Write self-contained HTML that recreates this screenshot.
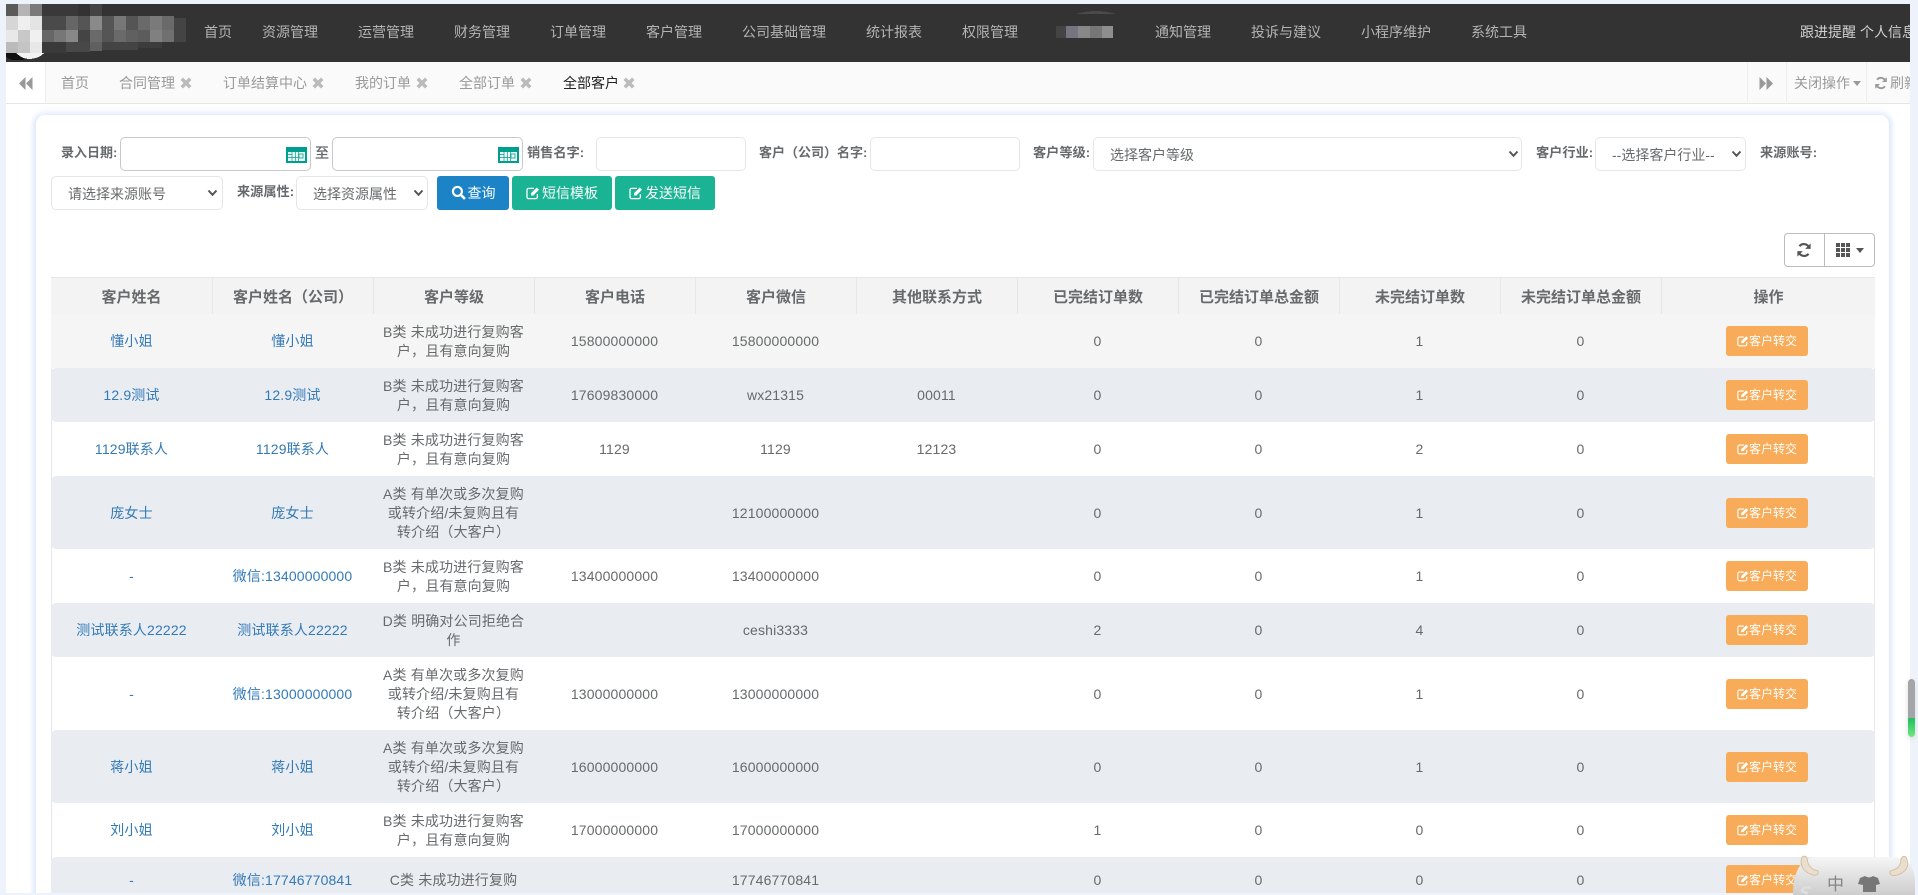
<!DOCTYPE html>
<html lang="zh"><head><meta charset="utf-8"><title>全部客户</title>
<style>
*{box-sizing:border-box}
html,body{margin:0;padding:0;width:1918px;height:895px;overflow:hidden;background:#eef3fb}
body{font-family:"Liberation Sans","Noto Sans CJK SC",sans-serif;font-size:14px;color:#676a6c;position:relative}
.a{position:absolute;white-space:nowrap}
#page{position:absolute;left:6px;top:4px;width:1904px;height:889px;background:#fff;overflow:hidden}
#root{position:absolute;left:-6px;top:-4px;width:1918px;height:895px}
#nav{position:absolute;left:6px;top:4px;width:1904px;height:58px;background:#333}
.n{position:absolute;top:22px;line-height:20px;color:#b4b4b4;white-space:nowrap;font-size:14px}
#tabs{position:absolute;left:6px;top:62px;width:1904px;height:42px;background:#fafafa;border-bottom:1px solid #e5e6e8}
.t{position:absolute;top:11px;line-height:20px;color:#999;font-size:14px;white-space:nowrap}
.x{position:absolute;top:15px;width:12px;height:12px;color:#bbb}
.v{position:absolute;top:0;width:1px;height:40px;background:#eee}
#card{position:absolute;left:36px;top:115px;width:1853px;height:800px;background:#fff;border-radius:9px;box-shadow:-3px 0 5px #dfe9fe,3px 0 5px #dfe9fe,0 -5px 9px #f2f7fe}
.l{position:absolute;top:142px;line-height:22px;font-size:13.2px;font-weight:bold;color:#676a6c;white-space:nowrap}
.i,select{position:absolute;height:34px;border:1px solid #e5e6e7;border-radius:5px;background:#fff;margin:0}
select{appearance:none;-webkit-appearance:none;font:14px "Liberation Sans","Noto Sans CJK SC",sans-serif;color:#676a6c;padding:2px 0 0 16px}
.cv{position:absolute;width:11px;height:8px;color:#555}
.b{position:absolute;top:176px;height:34px;border-radius:3px;color:#fff;font-size:14px;line-height:34px;text-align:center;white-space:nowrap}
.b svg{vertical-align:-2px;margin-right:2px}
table{position:absolute;left:51px;top:277px;width:1824px;border-collapse:separate;border-spacing:0;table-layout:fixed}
th{height:37px;background:#f3f3f4;font-size:15px;font-weight:bold;color:#676a6c;text-align:center;border-left:1px solid #e7e7e9;border-top:1px solid #e7e7e9;padding:0}
th:first-child{border-left:0}
td{text-align:center;vertical-align:middle;padding:8.5px 6px 7.5px;line-height:19px;font-size:14px;color:#676a6c;letter-spacing:.15px}
td a{color:#337ab7;text-decoration:none}
tr.h td{background:#f5f5f5;height:54px}
tr.g td{background:#e9ecf1}
tr.g td:first-child{border-radius:5px 0 0 5px}
tr.g td:last-child{border-radius:0 5px 5px 0}
.o{display:inline-block;width:82px;height:30px;line-height:30px;background:#f8ac59;color:#fff;font-size:12px;border-radius:3px;vertical-align:middle;letter-spacing:0;position:relative;top:-.5px;left:-1px}
.o svg{vertical-align:-2px}
</style></head><body>
<svg width="0" height="0" style="position:absolute">
<symbol id="ed" viewBox="0 0 14 14"><path d="M11.4 8v3a1.6 1.6 0 0 1-1.6 1.6H2.6A1.6 1.6 0 0 1 1 11V4a1.6 1.6 0 0 1 1.6-1.6H8" fill="none" stroke="currentColor" stroke-width="1.3"/><path d="M5 7.2 10.7 1.5 13 3.8 7.3 9.5H5Z" fill="currentColor"/></symbol>
<symbol id="xx" viewBox="0 0 12 12"><path d="M3 .5 6 3.5 9 .5 11.500 3 8.500 6 11.500 9 9 11.500 6 8.500 3 11.500 .5 9 3.500 6 .5 3Z" fill="currentColor"/></symbol>
<symbol id="cal" viewBox="0 0 21 16"><rect width="21" height="16" fill="#009e8e"/><rect x="2" y="5" width="17" height="9" fill="#eef9f7"/><path d="M2 7.500h4M2 10.500h10M6 5v9M9.500 5v9M12.500 5v9" stroke="#009e8e" stroke-width=".7"/><rect x="13" y="7" width="4" height="4" fill="#eef9f7" stroke="#009e8e" stroke-width=".8"/></symbol>
<symbol id="re" viewBox="0 0 14 14"><path d="M11.6 5.200A5 5 0 0 0 3 3.700M2.400 8.800A5 5 0 0 0 11 10.300" fill="none" stroke="currentColor" stroke-width="1.900"/><path d="M12.800 1.200V6H8ZM1.200 12.800V8H6Z" fill="currentColor"/></symbol>
<symbol id="cv" viewBox="0 0 11 8"><path d="M1.500 1.500 5.500 5.800 9.500 1.500" fill="none" stroke="currentColor" stroke-width="2"/></symbol>
</svg>
<div id="page"><div id="root">

<div id="nav"></div>
<svg class="a" style="left:6px;top:4px" width="186" height="58" viewBox="0 0 186 58" shape-rendering="crispEdges">
<path d="M0 46h40q-8 8-24 10H8q-6 0-8-4Z" fill="#111"/>
<path d="M8 46h32q-4 8-16 9-10 0-16-9Z" fill="#f2f2f2"/>
<g fill="#555"><rect width="12" height="12" fill="#5a5a5a"/><rect x="12" width="12" height="12" fill="#b4b4b4"/><rect x="24" width="12" height="12" fill="#7a7a7a"/><rect x="36" width="36" height="12" fill="#393939"/><rect x="84" width="12" height="12" fill="#444"/></g>
<rect y="12" width="12" height="14" fill="#d6d6d6"/><rect x="12" y="12" width="12" height="14" fill="#efefef"/><rect x="24" y="12" width="12" height="14" fill="#e4e4e4"/>
<rect x="36" y="12" width="24" height="14" fill="#4a4a4a"/><rect x="60" y="12" width="12" height="14" fill="#666"/><rect x="72" y="12" width="12" height="14" fill="#555"/><rect x="84" y="12" width="12" height="14" fill="#8a8a8a"/><rect x="96" y="12" width="12" height="14" fill="#555"/><rect x="108" y="12" width="12" height="14" fill="#777"/><rect x="120" y="12" width="12" height="14" fill="#555"/><rect x="132" y="12" width="12" height="14" fill="#6a6a6a"/><rect x="144" y="12" width="12" height="14" fill="#7a7a7a"/><rect x="156" y="12" width="12" height="14" fill="#6a6a6a"/><rect x="168" y="14" width="12" height="12" fill="#444"/>
<rect y="26" width="12" height="12" fill="#e8e8e8"/><rect x="12" y="26" width="12" height="12" fill="#c8c8c8"/><rect x="24" y="26" width="12" height="12" fill="#f0f0f0"/>
<rect x="36" y="26" width="12" height="12" fill="#666"/><rect x="48" y="26" width="12" height="12" fill="#777"/><rect x="60" y="26" width="12" height="12" fill="#888"/><rect x="72" y="26" width="12" height="12" fill="#444"/><rect x="84" y="26" width="12" height="12" fill="#6a6a6a"/><rect x="96" y="26" width="12" height="12" fill="#555"/><rect x="108" y="26" width="12" height="12" fill="#6a6a6a"/><rect x="120" y="26" width="12" height="12" fill="#606060"/><rect x="132" y="26" width="12" height="12" fill="#5c5c5c"/><rect x="144" y="26" width="12" height="12" fill="#808080"/><rect x="156" y="26" width="12" height="12" fill="#707070"/><rect x="168" y="26" width="12" height="12" fill="#444"/>
<rect y="38" width="12" height="11" fill="#bbb"/><rect x="12" y="38" width="12" height="11" fill="#c4c4c4"/><rect x="24" y="38" width="12" height="11" fill="#e8e8e8"/>
<rect x="36" y="38" width="24" height="11" fill="#3a3a3a"/><rect x="60" y="38" width="24" height="10" fill="#484848"/><rect x="84" y="38" width="12" height="9" fill="#606060"/><rect x="96" y="38" width="36" height="8" fill="#444"/><rect x="132" y="38" width="24" height="6" fill="#3c3c3c"/>
</svg>
<span class="n" style="left:204px">首页</span><span class="n" style="left:262px">资源管理</span><span class="n" style="left:358px">运营管理</span><span class="n" style="left:454px">财务管理</span><span class="n" style="left:550px">订单管理</span><span class="n" style="left:646px">客户管理</span><span class="n" style="left:742px">公司基础管理</span><span class="n" style="left:866px">统计报表</span><span class="n" style="left:962px">权限管理</span>
<svg class="a" style="left:1056px;top:10px" width="64" height="40" viewBox="0 0 64 40" shape-rendering="crispEdges"><path d="M20 4Q40-2 60 4Z" fill="#4a4a4a"/><rect y="16" width="10" height="12" fill="#444"/><rect x="10" y="16" width="12" height="12" fill="#777380"/><rect x="22" y="16" width="12" height="12" fill="#888"/><rect x="34" y="16" width="12" height="12" fill="#777"/><rect x="46" y="16" width="11" height="12" fill="#8e8e8e"/></svg>
<span class="n" style="left:1155px">通知管理</span><span class="n" style="left:1251px">投诉与建议</span><span class="n" style="left:1361px">小程序维护</span><span class="n" style="left:1471px">系统工具</span>
<span class="n" style="left:1800px;color:#d0d0d0">跟进提醒</span><span class="n" style="left:1860px;color:#d0d0d0;width:50px;overflow:hidden">个人信息</span>

<div id="tabs">
<div class="a" style="left:0;top:0;width:39px;height:41px;background:#fff"></div>
<svg class="a" style="left:13px;top:15px;color:#999" width="14" height="13" viewBox="0 0 14 13"><path d="M0 6.500 6.500 0V13ZM7 6.500 13.500 0V13Z" fill="currentColor"/></svg>
<i class="v" style="left:39px"></i>
<span class="t" style="left:55px">首页</span>
<span class="t" style="left:113px">合同管理</span><svg class="x" style="left:174px"><use href="#xx"/></svg>
<span class="t" style="left:217px">订单结算中心</span><svg class="x" style="left:306px"><use href="#xx"/></svg>
<span class="t" style="left:349px">我的订单</span><svg class="x" style="left:410px"><use href="#xx"/></svg>
<span class="t" style="left:453px">全部订单</span><svg class="x" style="left:514px"><use href="#xx"/></svg>
<span class="t" style="left:557px;color:#222">全部客户</span><svg class="x" style="left:617px"><use href="#xx"/></svg>
<i class="v" style="left:1741px"></i>
<svg class="a" style="left:1753px;top:15px;color:#999" width="14" height="13" viewBox="0 0 14 13"><path d="M7 6.500 .5 0V13ZM14 6.500 7.500 0V13Z" fill="currentColor"/></svg>
<i class="v" style="left:1780px"></i>
<span class="t" style="left:1788px">关闭操作</span><svg class="a" style="left:1847px;top:19px;color:#999" width="8" height="5"><path d="M0 0H8L4 5Z" fill="currentColor"/></svg>
<i class="v" style="left:1860px"></i>
<svg class="a" style="left:1868px;top:14px;color:#999" width="14" height="14"><use href="#re"/></svg>
<span class="t" style="left:1884px;width:20px;overflow:hidden">刷新</span>
</div>

<div id="card"></div>

<span class="l" style="left:61px;font-size:13px">录入日期:</span>
<input class="i" style="left:120px;top:137px;width:191px;border-color:#c9c9c9"><svg class="a" style="left:286px;top:147px" width="21" height="16"><use href="#cal"/></svg>
<span class="l" style="left:315px;font-size:14px;font-weight:normal;-webkit-text-stroke:.3px #676a6c">至</span>
<input class="i" style="left:332px;top:137px;width:191px;border-color:#c9c9c9"><svg class="a" style="left:498px;top:147px" width="21" height="16"><use href="#cal"/></svg>
<span class="l" style="left:527px">销售名字:</span>
<input class="i" style="left:596px;top:137px;width:150px">
<span class="l" style="left:759px;font-size:13px">客户（公司）名字:</span>
<input class="i" style="left:870px;top:137px;width:150px">
<span class="l" style="left:1033px">客户等级:</span>
<select style="left:1093px;top:137px;width:429px"><option>选择客户等级</option></select><svg class="cv" style="left:1508px;top:150px"><use href="#cv"/></svg>
<span class="l" style="left:1536px">客户行业:</span>
<select style="left:1595px;top:137px;width:151px"><option>--选择客户行业--</option></select><svg class="cv" style="left:1731px;top:150px"><use href="#cv"/></svg>
<span class="l" style="left:1760px">来源账号:</span>

<select style="left:51px;top:176px;width:172px"><option>请选择来源账号</option></select><svg class="cv" style="left:207px;top:189px"><use href="#cv"/></svg>
<span class="l" style="left:237px;top:181px">来源属性:</span>
<select style="left:296px;top:176px;width:132px"><option>选择资源属性</option></select><svg class="cv" style="left:413px;top:189px"><use href="#cv"/></svg>
<div class="b" style="left:437px;width:72px;background:#1c84c6"><svg width="15" height="15" viewBox="0 0 14 14"><circle cx="6" cy="6" r="4.200" fill="none" stroke="#fff" stroke-width="2"/><path d="M9 9 13 13" stroke="#fff" stroke-width="2.400"/></svg>查询</div>
<div class="b" style="left:512px;width:100px;background:#1ab394"><svg width="14" height="14"><use href="#ed"/></svg>短信模板</div>
<div class="b" style="left:615px;width:100px;background:#1ab394"><svg width="14" height="14"><use href="#ed"/></svg>发送短信</div>

<div class="a" style="left:1784px;top:233px;width:91px;height:34px;border:1px solid #b9bcc0;border-radius:4px;background:#fff"></div>
<i class="a" style="left:1824px;top:233px;width:1px;height:34px;background:#b9bcc0"></i>
<svg class="a" style="left:1796px;top:242px;color:#555" width="16" height="16"><use href="#re"/></svg>
<svg class="a" style="left:1836px;top:243px;color:#555" width="14" height="14" viewBox="0 0 14 14"><path d="M0 0h4v4H0ZM5 0h4v4H5ZM10 0h4v4h-4ZM0 5h4v4H0ZM5 5h4v4H5ZM10 5h4v4h-4ZM0 10h4v4H0ZM5 10h4v4H5ZM10 10h4v4h-4Z" fill="currentColor"/></svg>
<svg class="a" style="left:1856px;top:248px;color:#555" width="8" height="5"><path d="M0 0H8L4 5Z" fill="currentColor"/></svg>

<i class="a" style="left:51px;top:277px;width:1px;height:620px;background:#e7e7e9"></i>
<i class="a" style="left:1874px;top:277px;width:1px;height:620px;background:#e7e7e9"></i>
<table>
<colgroup><col style="width:161px"><col style="width:161px"><col style="width:161px"><col style="width:161px"><col style="width:161px"><col style="width:161px"><col style="width:161px"><col style="width:161px"><col style="width:161px"><col style="width:161px"><col></colgroup>
<thead><tr><th>客户姓名</th><th>客户姓名（公司）</th><th>客户等级</th><th>客户电话</th><th>客户微信</th><th>其他联系方式</th><th>已完结订单数</th><th>已完结订单总金额</th><th>未完结订单数</th><th>未完结订单总金额</th><th>操作</th></tr></thead>
<tbody>
<tr class="h"><td><a>懂小姐</a></td><td><a>懂小姐</a></td><td>B类 未成功进行复购客<br>户，且有意向复购</td><td>15800000000</td><td>15800000000</td><td></td><td>0</td><td>0</td><td>1</td><td>0</td><td><span class="o"><svg width="12" height="12"><use href="#ed"/></svg>客户转交</span></td></tr>
<tr class="g"><td><a>12.9测试</a></td><td><a>12.9测试</a></td><td>B类 未成功进行复购客<br>户，且有意向复购</td><td>17609830000</td><td>wx21315</td><td>00011</td><td>0</td><td>0</td><td>1</td><td>0</td><td><span class="o"><svg width="12" height="12"><use href="#ed"/></svg>客户转交</span></td></tr>
<tr><td><a>1129联系人</a></td><td><a>1129联系人</a></td><td>B类 未成功进行复购客<br>户，且有意向复购</td><td>1129</td><td>1129</td><td>12123</td><td>0</td><td>0</td><td>2</td><td>0</td><td><span class="o"><svg width="12" height="12"><use href="#ed"/></svg>客户转交</span></td></tr>
<tr class="g"><td><a>庞女士</a></td><td><a>庞女士</a></td><td>A类 有单次或多次复购<br>或转介绍/未复购且有<br>转介绍（大客户）</td><td></td><td>12100000000</td><td></td><td>0</td><td>0</td><td>1</td><td>0</td><td><span class="o"><svg width="12" height="12"><use href="#ed"/></svg>客户转交</span></td></tr>
<tr><td><a>-</a></td><td><a>微信:13400000000</a></td><td>B类 未成功进行复购客<br>户，且有意向复购</td><td>13400000000</td><td>13400000000</td><td></td><td>0</td><td>0</td><td>1</td><td>0</td><td><span class="o"><svg width="12" height="12"><use href="#ed"/></svg>客户转交</span></td></tr>
<tr class="g"><td><a>测试联系人22222</a></td><td><a>测试联系人22222</a></td><td>D类 明确对公司拒绝合<br>作</td><td></td><td>ceshi3333</td><td></td><td>2</td><td>0</td><td>4</td><td>0</td><td><span class="o"><svg width="12" height="12"><use href="#ed"/></svg>客户转交</span></td></tr>
<tr><td><a>-</a></td><td><a>微信:13000000000</a></td><td>A类 有单次或多次复购<br>或转介绍/未复购且有<br>转介绍（大客户）</td><td>13000000000</td><td>13000000000</td><td></td><td>0</td><td>0</td><td>1</td><td>0</td><td><span class="o"><svg width="12" height="12"><use href="#ed"/></svg>客户转交</span></td></tr>
<tr class="g"><td><a>蒋小姐</a></td><td><a>蒋小姐</a></td><td>A类 有单次或多次复购<br>或转介绍/未复购且有<br>转介绍（大客户）</td><td>16000000000</td><td>16000000000</td><td></td><td>0</td><td>0</td><td>1</td><td>0</td><td><span class="o"><svg width="12" height="12"><use href="#ed"/></svg>客户转交</span></td></tr>
<tr><td><a>刘小姐</a></td><td><a>刘小姐</a></td><td>B类 未成功进行复购客<br>户，且有意向复购</td><td>17000000000</td><td>17000000000</td><td></td><td>1</td><td>0</td><td>0</td><td>0</td><td><span class="o"><svg width="12" height="12"><use href="#ed"/></svg>客户转交</span></td></tr>
<tr class="g"><td><a>-</a></td><td><a>微信:17746770841</a></td><td>C类 未成功进行复购</td><td></td><td>17746770841</td><td></td><td>0</td><td>0</td><td>0</td><td>0</td><td><span class="o"><svg width="12" height="12"><use href="#ed"/></svg>客户转交</span></td></tr>
</tbody></table>
</div></div>

<div class="a" style="left:1908px;top:679px;width:7px;height:58px;border-radius:4px;background:linear-gradient(#a3a5a9 0 67%,#1fbf5c 68%,#6fe97f 100%);box-shadow:0 2px 6px #ddd"></div>
<svg class="a" style="left:1793px;top:855px" width="125" height="40" viewBox="0 0 125 40">
<defs><linearGradient id="sg" x1="0" y1="0" x2="0" y2="1"><stop offset="0" stop-color="#f6f6f6"/><stop offset="1" stop-color="#cdcdcd"/></linearGradient></defs>
<path d="M0 40Q0 2 26 2H98Q122 2 122 28V40Z" fill="url(#sg)"/>
<path d="M9 2Q5 15 20 20 26 21 25 16 15 14 14 3 12 0 9 2Z" fill="#eadfce" stroke="#d2c1a6" stroke-width="1"/>
<path d="M113 2Q119 15 104 20 96 22 97 16 108 14 108 4 110 0 113 2Z" fill="#eadfce" stroke="#d2c1a6" stroke-width="1"/>
<text x="34" y="35" font-family="'Noto Sans CJK SC',sans-serif" font-size="17" fill="#858585">中</text>
<path d="M67 23 72 21Q76 24 80 21L85 23 87 29 83 30V37H70V30L65 29Z" fill="#777"/>
<path d="M18 33Q10 31 9 36 11 38 15 38" fill="none" stroke="#dedede" stroke-width="2.500"/>
</svg>
</body></html>
